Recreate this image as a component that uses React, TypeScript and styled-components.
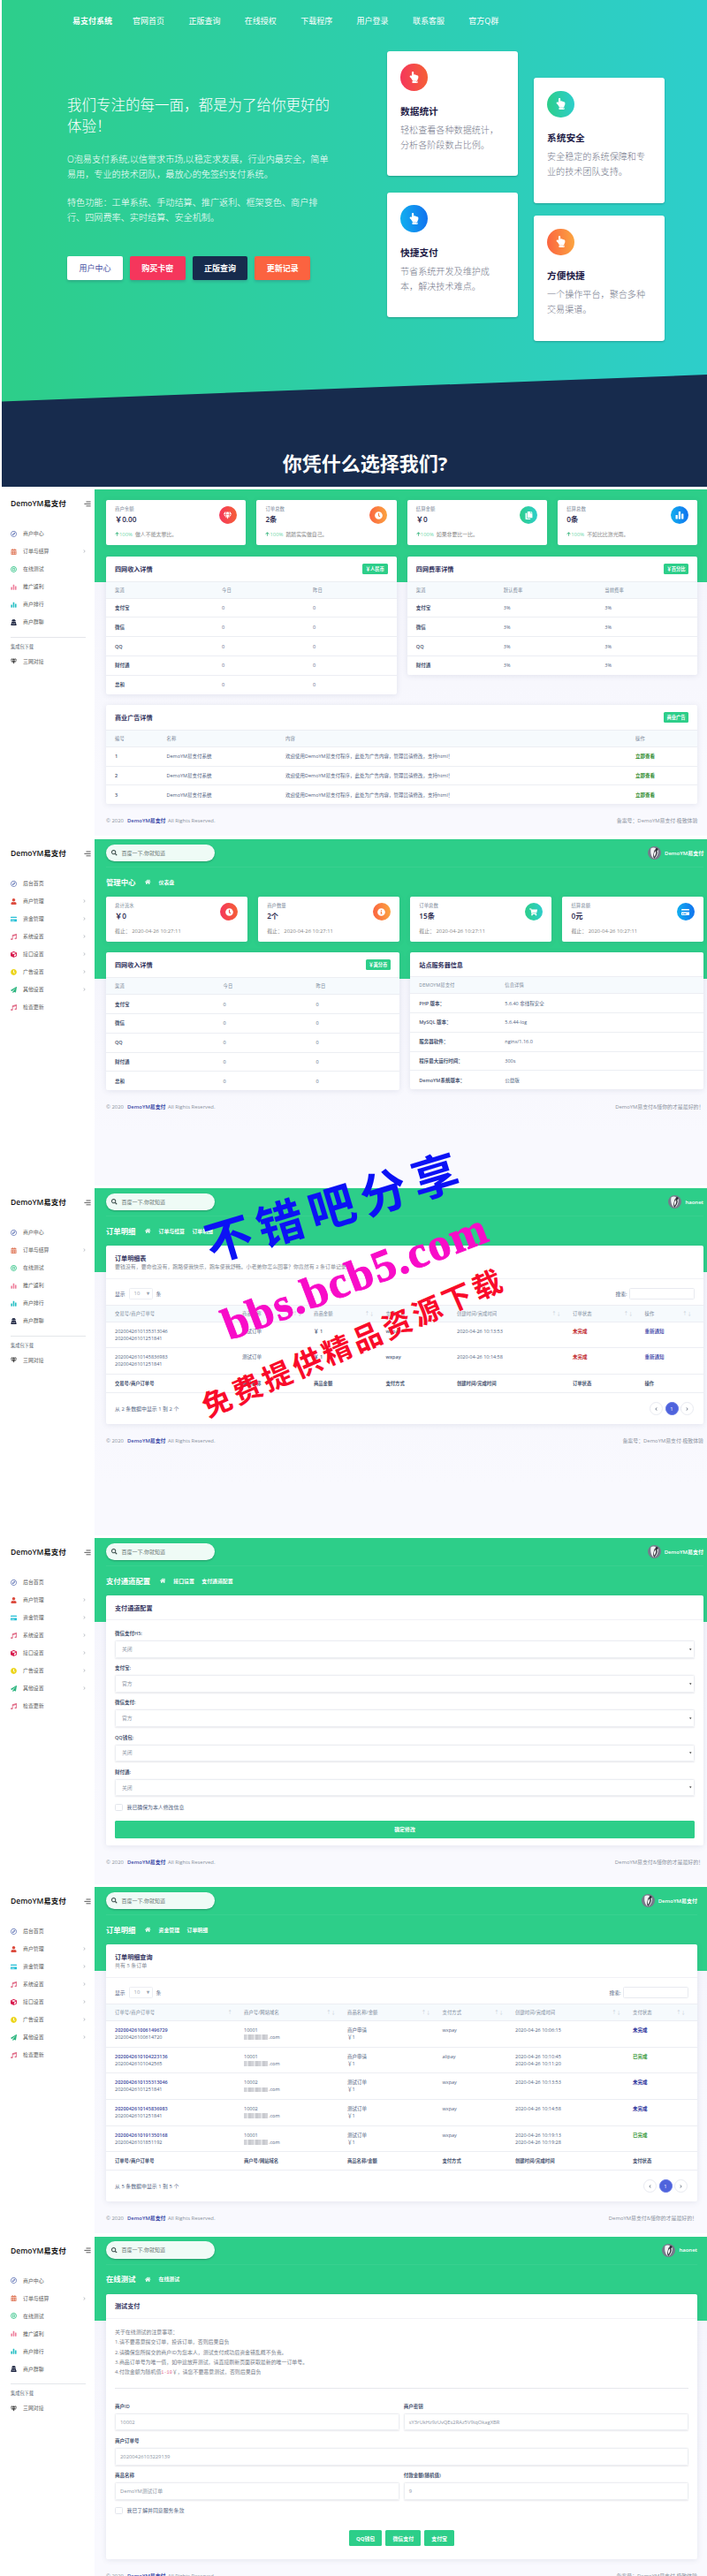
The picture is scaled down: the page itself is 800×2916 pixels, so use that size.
import React from "react";
import styled, { createGlobalStyle, css } from "styled-components";
import {
  FaHandPointUp, FaRegCompass, FaCalendarAlt, FaBullseye, FaUserSecret, FaGem, FaUser, FaCreditCard,
  FaMusic, FaCube, FaClock, FaPaperPlane, FaHome, FaSearch, FaArrowUp, FaCopy, FaShoppingCart,
  FaChevronRight, FaChevronLeft, FaInfoCircle,
} from "react-icons/fa";

const GREEN = "#2dce89";

const Global = createGlobalStyle`
  * { box-sizing: border-box; }
  body { margin: 0; background: #fff; }
  body, input, button { font-family: "Open Sans", "Noto Sans CJK SC", sans-serif; }
`;

const Page = styled.div`
  position: relative;
  width: 800px;
  height: 2916px;
  overflow: hidden;
  color: #525f7f;
  font-size: 5.5px;
  line-height: 8px;
  white-space: nowrap;
`;

/* ---------- landing ---------- */
const Hero = styled.section`
  margin-left: 2px;
  height: 551px;
  background: #172b4d;
`;
const HeroGreen = styled.div`
  height: 455px;
  background: linear-gradient(87deg, #2dce89, #2dcecc);
  clip-path: polygon(0 0, 100% 0, 100% 424px, 0 454.5px);
`;
const HeroNav = styled.nav`
  display: grid;
  grid-template-columns: 68px repeat(7, 63.4px);
  align-items: center;
  height: 48px;
  padding-left: 80px;
  color: #fff;
  font-size: 9px;
  strong { font-weight: 700; }
`;
const HeroBody = styled.div`
  display: flex;
  padding-left: 74px;
  color: #fff;
`;
const Intro = styled.div`
  width: 362px;
  padding-top: 59px;
`;
const Headline = styled.h1`
  margin: 0 0 16px;
  font-size: 16.5px;
  line-height: 24.3px;
  font-weight: 300;
`;
const Lead = styled.p`
  margin: 0 0 15.5px;
  font-size: 10.15px;
  line-height: 17px;
  font-weight: 300;
`;
const HeroButtons = styled.div`
  display: flex;
  gap: 8px;
  margin-top: 34.5px;
`;
const HeroButton = styled.button<{ $bg: string; $fg?: string }>`
  width: 62.8px;
  height: 27.5px;
  padding: 0;
  border: 0;
  border-radius: 2px;
  background: ${(p) => p.$bg};
  color: ${(p) => p.$fg || "#fff"};
  font-size: 9px;
  font-weight: ${(p) => (p.$fg ? 400 : 600)};
  box-shadow: 0 2px 3px rgba(50, 50, 93, 0.2);
`;
const FeatureColumn = styled.div<{ $top: number; $gap: number }>`
  display: flex;
  flex-direction: column;
  gap: ${(p) => p.$gap}px;
  margin-right: 18.5px;
  padding-top: ${(p) => p.$top}px;
`;
const FeatureCard = styled.article`
  width: 147.5px;
  height: 141.8px;
  padding: 14.5px 15px;
  border-radius: 3px;
  background: #fff;
  box-shadow: 0 1px 2px rgba(0, 60, 60, 0.3);
  h3 { margin: 16px 0 5px; color: #211a45; font-size: 10.7px; line-height: 15px; }
  p { margin: 0; color: #74788a; font-size: 10.1px; line-height: 17px; font-weight: 300; }
`;
const Disc = styled.span<{ $bg: string; $size: number }>`
  display: flex;
  flex: none;
  align-items: center;
  justify-content: center;
  width: ${(p) => p.$size}px;
  height: ${(p) => p.$size}px;
  border-radius: 50%;
  background: ${(p) => p.$bg};
  color: #fff;
  font-size: ${(p) => (p.$size > 25 ? 13 : 9)}px;
`;
const HeroTitle = styled.h2`
  margin: 53px 0 0;
  padding-left: 24px;
  color: #fff;
  text-align: center;
  font-size: 22px;
  line-height: 32px;
  font-weight: 700;
`;

/* ---------- dashboard shell ---------- */
const Shell = styled.section<{ $gap: number; $height: number }>`
  display: flex;
  height: ${(p) => p.$height}px;
  padding-top: ${(p) => p.$gap}px;
`;
const Side = styled.aside`
  width: 107px;
  flex: none;
  padding: 0 10px 0 12px;
`;
const Brand = styled.div`
  display: flex;
  align-items: center;
  justify-content: space-between;
  height: 32px;
  margin: 0 -6px 8px 0;
  color: #111;
  font-size: 8.5px;
  font-weight: 600;
`;
const NavItem = styled.div`
  display: flex;
  align-items: center;
  height: 20px;
  color: #5c5c5c;
  font-size: 5.9px;
  > svg { width: 7px; height: 7px; margin-right: 7px; }
  > svg:last-child:not(:first-child) { width: 3px; height: 4px; margin: 0 0 0 auto; color: #b8bcc2; }
`;
const SideLabel = styled.div`
  margin-top: 6.5px;
  padding-top: 6px;
  height: 18px;
  border-top: 1px solid #e4e6ea;
  font-size: 5.2px;
  color: #555f70;
`;
const Main = styled.main<{ $green: number; $right: number }>`
  flex: 1;
  min-width: 0;
  padding: 0 ${(p) => p.$right}px 0 13px;
  background: linear-gradient(${GREEN} ${(p) => p.$green}px, #f5f5fc ${(p) => p.$green}px, #f9f9fe 85%);
`;
const TopBar = styled.header`
  display: flex;
  align-items: center;
  justify-content: space-between;
  height: 32px;
  border-bottom: 1px solid rgba(255, 255, 255, 0.06);
`;
const Search = styled.div`
  display: flex;
  align-items: center;
  gap: 5px;
  width: 122.5px;
  height: 19.5px;
  padding-left: 6px;
  border-radius: 10px;
  background: #effbf6;
  color: #6b7775;
  font-size: 6px;
  box-shadow: 0 1px 2px rgba(20, 80, 60, 0.4);
  svg { width: 6.5px; height: 6.5px; color: #394b48; }
`;
const Account = styled.div`
  display: flex;
  align-items: center;
  gap: 4px;
  color: #fff;
  font-size: 6px;
  font-weight: 600;
`;
const TitleRow = styled.div`
  display: flex;
  align-items: center;
  height: 33px;
  color: #fff;
  font-size: 5.9px;
  font-weight: 600;
  h2 { margin: 0 10.5px 0 0; font-size: 8.4px; font-weight: 700; }
  svg { width: 6.5px; height: 6.5px; margin-right: 9px; }
  span { margin-right: 8.5px; }
`;
const StatRow = styled.div<{ $top?: number }>`
  display: grid;
  grid-template-columns: repeat(4, 1fr);
  gap: 12.3px;
  margin: ${(p) => p.$top || 0}px 0 12.5px;
`;
const cardBox = css`
  border-radius: 2px;
  background: #fff;
  box-shadow: 0 1px 6px rgba(70, 80, 120, 0.12);
`;
const StatCard = styled.div`
  ${cardBox}
  display: flex;
  justify-content: space-between;
  height: 50.7px;
  padding: 7px 10.5px 0 10px;
`;
const StatLabel = styled.div`
  font-size: 5.4px;
  line-height: 7px;
  color: #7a8798;
`;
const StatValue = styled.div`
  margin: 2.5px 0 10px;
  color: #28264b;
  font-size: 8.2px;
  line-height: 9px;
  font-weight: 600;
`;
const StatFoot = styled.div`
  color: #888;
  font-size: 5.9px;
  line-height: 7px;
  em { margin-right: 3px; color: #71d8ab; font-style: normal; }
  em svg { width: 5px; height: 5px; color: #3ab57e; vertical-align: -0.5px; }
`;
const TwoUp = styled.div`
  display: grid;
  grid-template-columns: 1fr 1fr;
  align-items: start;
  gap: 12.3px;
`;
const Card = styled.div<{ $top?: number; $height?: number }>`
  ${cardBox}
  margin-top: ${(p) => p.$top || 0}px;
  height: ${(p) => (p.$height ? p.$height + "px" : "auto")};
  overflow: hidden;
`;
const CardHead = styled.div<{ $height?: number; $line?: boolean }>`
  display: flex;
  align-items: center;
  justify-content: space-between;
  height: ${(p) => p.$height || 28}px;
  padding: 0 10px;
  border-bottom: ${(p) => (p.$line ? "1px solid #f1f2f6" : "0")};
  h3 { margin: 0; color: #32325d; font-size: 7.1px; line-height: 10px; font-weight: 700; }
  p { margin: 0; color: #838993; font-size: 5.95px; line-height: 10px; }
`;
const Chip = styled.span`
  width: 28.5px;
  height: 12px;
  border-radius: 1.5px;
  background: ${GREEN};
  color: #fff;
  font-size: 5.3px;
  line-height: 12px;
  font-weight: 700;
  text-align: center;
`;
const Row = styled.div<{ $cols: string; $kind?: "head" | "foot" | "body"; $height: number; $top?: boolean }>`
  display: grid;
  grid-template-columns: ${(p) => p.$cols};
  align-items: ${(p) => (p.$top ? "start" : "center")};
  height: ${(p) => p.$height}px;
  padding: ${(p) => (p.$top ? "6px" : "0")} 0 0 10px;
  border-top: 1px solid #eceef3;
  ${(p) => p.$kind === "head" && css`background: #f6fafd; color: #7d8b9c; font-size: 5.3px; letter-spacing: 0.1px;`}
  ${(p) => p.$kind === "foot" && css`border-bottom: 1px solid #eceef3; font-weight: 600; font-size: 5.3px; color: #47536f;`}
`;
const Cell = styled.div<{ $color?: string; $bold?: boolean; $sort?: boolean }>`
  color: ${(p) => p.$color || "inherit"};
  font-weight: ${(p) => (p.$bold ? 600 : 400)};
  ${(p) => p.$sort && css`display: flex; justify-content: space-between; padding-right: 13px;`}
  i { color: #c9d0d9; font-style: normal; }
`;
const Footer = styled.footer`
  display: flex;
  align-items: center;
  justify-content: space-between;
  height: 10px;
  margin-top: 14px;
  color: #8c93a0;
  font-size: 5.9px;
  b { margin: 0 1px; color: #3b4aa8; font-weight: 600; }
`;
const ListTools = styled.div`
  display: flex;
  align-items: center;
  height: 29px;
  padding: 4px 10px 0;
  gap: 5px;
  font-size: 5.8px;
  color: #525f7f;
  > span:nth-of-type(3) { margin-left: auto; margin-right: -2.5px; }
`;
const LengthSelect = styled.div`
  display: flex;
  justify-content: space-between;
  width: 27px;
  height: 13px;
  margin: 0 -1px;
  padding: 0 3px 0 5px;
  border: 1px solid #eceef3;
  border-radius: 1.5px;
  color: #9aa3b0;
  line-height: 11px;
  font-size: 5.9px;
`;
const FilterInput = styled.input`
  width: 74px;
  height: 13px;
  border: 1px solid #e8eaf0;
  border-radius: 1.5px;
  outline: 0;
`;
const SearchLabel = styled.label`
  margin: 0 -2.5px 0 auto;
`;
const ListBottom = styled.div`
  display: flex;
  align-items: center;
  justify-content: space-between;
  height: 35px;
  padding: 0 11px 0 10px;
  font-size: 5.9px;
`;
const Pager = styled.div`
  display: flex;
  gap: 2.5px;
`;
const PageDot = styled.span<{ $on?: boolean }>`
  display: flex;
  align-items: center;
  justify-content: center;
  width: 15px;
  height: 15px;
  border: 1px solid ${(p) => (p.$on ? "#5e72e4" : "#e8eaf1")};
  border-radius: 50%;
  background: ${(p) => (p.$on ? "#4f63dc" : "#fff")};
  color: ${(p) => (p.$on ? "#fff" : "#6a7486")};
  svg { width: 3px; height: 4px; }
`;
const Mosaic = styled.span`
  display: inline-block;
  width: 27px;
  height: 5.5px;
  margin-right: 1px;
  vertical-align: -1px;
  background: repeating-linear-gradient(90deg, #d2d3d8 0 3px, #e4e5e8 3px 5px, #c9cacf 5px 8px);
`;
const Form = styled.div<{ $top: number }>`
  padding: ${(p) => p.$top}px 10px 0;
`;
const FieldGrid = styled.div<{ $two?: boolean }>`
  display: grid;
  grid-template-columns: ${(p) => (p.$two ? "1fr 1fr" : "1fr")};
  gap: 4.5px;
  height: 39.1px;
`;
const FieldLabel = styled.div`
  height: 12px;
  font-weight: 600;
  color: #47536f;
`;
const FieldBox = styled.div<{ $pad?: number }>`
  display: flex;
  align-items: center;
  justify-content: space-between;
  height: 19.8px;
  padding: 0 2.5px 0 ${(p) => p.$pad || 5}px;
  border: 1px solid #eceef2;
  border-radius: 1.5px;
  box-shadow: 0 0.5px 1.5px rgba(50, 50, 93, 0.1);
  color: #8d96a5;
  font-size: 5.8px;
  svg { width: 2.5px; height: 2.5px; color: #444; }
`;
const CheckLine = styled.div`
  display: flex;
  align-items: center;
  gap: 5px;
  height: 10px;
  font-size: 5.9px;
  &::before { content: ""; width: 6.5px; height: 6.5px; border: 1px solid #e3e6ec; border-radius: 1.5px; }
`;
const Submit = styled.button`
  display: block;
  width: 100%;
  height: 20px;
  margin-top: 10px;
  padding: 0;
  border: 0;
  border-radius: 1.5px;
  background: ${GREEN};
  color: #fff;
  font-size: 5.9px;
  font-weight: 700;
`;
const Notes = styled.div`
  height: 69.5px;
  border-bottom: 1px solid #e6e8ed;
  font-size: 5.93px;
  line-height: 11.4px;
  color: #777d89;
  code { color: #e56a91; font: 5.2px "Liberation Mono", monospace; }
`;
const PayButtons = styled.div`
  display: flex;
  justify-content: center;
  gap: 3.7px;
  margin: 17px 0 0;
  button {
    height: 18.3px; padding: 0 8.3px; border: 0; border-radius: 1.5px;
    background: ${GREEN}; color: #fff; font-size: 5.9px; font-weight: 700;
  }
`;
const Stamp = styled.div<{ $x: number; $y: number; $turn: number; $size: number; $gap: number; $color: string; $stroke?: number }>`
  position: absolute;
  left: ${(p) => p.$x}px;
  top: ${(p) => p.$y}px;
  transform: translate(-50%, -50%) rotate(${(p) => p.$turn}deg);
  color: ${(p) => p.$color};
  font-family: "Liberation Serif", "Noto Sans CJK SC", serif;
  font-size: ${(p) => p.$size}px;
  letter-spacing: ${(p) => p.$gap}px;
  line-height: 1.15;
  font-weight: 700;
  -webkit-text-stroke: ${(p) => p.$stroke || 0}px ${(p) => p.$color};
`;

/* ---------- drawings ---------- */
const BarsIcon = ({ color = "currentColor", size = 10 }: { color?: string; size?: number }) => (
  <svg width={size} height={size} viewBox="0 0 10 10" fill={color}>
    <rect x="0.5" y="5" width="2.3" height="4.5" rx="0.5" /><rect x="3.8" y="1" width="2.3" height="8.5" rx="0.5" /><rect x="7.1" y="3.5" width="2.3" height="6" rx="0.5" />
  </svg>
);
const MenuIcon = () => (
  <svg width="8" height="7" viewBox="0 0 8 7" stroke="#4b4b4b" strokeWidth="0.9">
    <path d="M2.5 1H7.6M0.4 3.4H7.6M2.5 5.8H7.6" />
  </svg>
);
const CaretIcon = () => <svg viewBox="0 0 6 5"><path d="M0 0H6L3 5Z" fill="currentColor" /></svg>;
const Avatar = () => (
  <svg width="15" height="15" viewBox="0 0 30 30">
    <circle cx="15" cy="15" r="15" fill="#777a8b" />
    <path d="M7 5C11 1 20 3 23 8C25 15 21 25 15 28C9 26 5 17 7 5Z" fill="#f3f3f5" />
    <path d="M15 9C21 7 23 12 20 20L15 28C11 25 12 19 15 9Z" fill="#30313a" />
    <path d="M17 11C20 12 18 19 15 24C13 20 14 14 17 11Z" fill="#fff" />
    <circle cx="20" cy="7" r="3" fill="#292a33" />
  </svg>
);

const RED = "linear-gradient(87deg,#f5365c,#f56036)";
const ORANGE = "linear-gradient(87deg,#fb6340,#fba540)";
const TEAL = "linear-gradient(87deg,#2dce89,#2dcecc)";
const BLUE = "linear-gradient(87deg,#11b0ef,#1171ef)";

type Item = [React.ReactNode, string, boolean?];
const userItems: Item[] = [
  [<FaRegCompass color="#5e72b4" />, "商户中心"],
  [<FaCalendarAlt color="#e07a5c" />, "订单与结算", true],
  [<FaBullseye color="#4fcb97" />, "在线测试"],
  [<BarsIcon color="#ee7f9c" />, "推广返利"],
  [<BarsIcon color="#27bfc4" />, "商户排行"],
  [<FaUserSecret color="#1c2440" />, "商户群聊"],
];
const adminItems: Item[] = [
  [<FaRegCompass color="#5e72b4" />, "后台首页"],
  [<FaUser color="#dc4b3e" />, "商户管理", true],
  [<FaCreditCard color="#25bfd6" />, "资金管理", true],
  [<FaMusic color="#e2718c" />, "系统设置", true],
  [<FaCube color="#d8194c" />, "接口设置", true],
  [<FaClock color="#ecd51c" />, "广告设置", true],
  [<FaPaperPlane color="#2bb57e" />, "其他设置", true],
  [<FaMusic color="#e2718c" />, "检查更新"],
];
const NavEntry = ({ item }: { item: Item }) => (
  <NavItem>{item[0]}<span>{item[1]}</span>{item[2] && <FaChevronRight />}</NavItem>
);
const Sidebar = ({ admin }: { admin?: boolean }) => (
  <Side>
    <Brand>DemoYM易支付<MenuIcon /></Brand>
    {(admin ? adminItems : userItems).map((it) => <NavEntry key={it[1]} item={it} />)}
    {!admin && (<><SideLabel>集成包下载</SideLabel><NavEntry item={[<FaGem color="#404040" />, "三网对接"]} /></>)}
  </Side>
);
const Header = ({ name, title, crumbs }: { name: string; title: string; crumbs: string[] }) => (
  <>
    <TopBar>
      <Search><FaSearch />百度一下,你就知道</Search>
      <Account><Avatar />{name}</Account>
    </TopBar>
    <TitleRow><h2>{title}</h2><FaHome />{crumbs.map((c) => <span key={c}>{c}</span>)}</TitleRow>
  </>
);
const Foot = ({ admin }: { admin?: boolean }) => (
  <Footer>
    <div>© 2020 &nbsp;<b>DemoYM易支付</b> All Rights Reserved.</div>
    <div>{admin ? "DemoYM易支付&懂你的才是最好的！" : "备案号：DemoYM易支付·极致体验"}</div>
  </Footer>
);
const Stat = ({ label, value, foot, bg, icon }: { label: string; value: string; foot: React.ReactNode; bg: string; icon: React.ReactNode }) => (
  <StatCard>
    <div><StatLabel>{label}</StatLabel><StatValue>{value}</StatValue><StatFoot>{foot}</StatFoot></div>
    <Disc $bg={bg} $size={20}>{icon}</Disc>
  </StatCard>
);
const Up = ({ children }: { children: React.ReactNode }) => <><em><FaArrowUp />100%</em>{children}</>;

const SimpleTable = ({ cols, head, rows, height = 21.8 }: { cols: string; head: string[]; rows: string[][]; height?: number }) => (
  <>
    <Row $cols={cols} $kind="head" $height={19}>{head.map((h) => <Cell key={h}>{h}</Cell>)}</Row>
    {rows.map((r) => (
      <Row key={r[0]} $cols={cols} $height={height}>
        {r.map((c, i) => <Cell key={i} $bold={i === 0 || c === "立即查看"} $color={i === 0 ? "#47536f" : c === "立即查看" ? "#2e8b2e" : undefined}>{c}</Cell>)}
      </Row>
    ))}
  </>
);
const incomeRows = ["支付宝", "微信", "QQ", "财付通", "总和"].map((n) => [n, "0", "0"]);

const SortHead = ({ cols, head }: { cols: string; head: string[] }) => (
  <Row $cols={cols} $kind="head" $height={18.7}>
    {head.map((h, i) => <Cell key={h} $sort>{h}<i>{i ? "↑↓" : "↑"}</i></Cell>)}
  </Row>
);
const Tools = () => (
  <ListTools>
    <span>显示</span><LengthSelect>10<b>▾</b></LengthSelect><span>条</span>
    <SearchLabel>搜索:</SearchLabel><FilterInput aria-label="搜索" />
  </ListTools>
);
const Bottom = ({ n }: { n: number }) => (
  <ListBottom>
    从 {n} 条数据中显示 1 到 {n} 个
    <Pager><PageDot><FaChevronLeft /></PageDot><PageDot $on>1</PageDot><PageDot><FaChevronRight /></PageDot></Pager>
  </ListBottom>
);

const orderCols = "144px 81px 81.5px 80.5px 131px 81.5px 1fr";
const orderHead = ["交易号/商户订单号", "商品名称", "商品金额", "支付方式", "创建时间/完成时间", "订单状态", "操作"];
const adminCols = "146px 117px 107.5px 82.5px 133px 1fr";
const adminHead = ["订单号/商户订单号", "商户号/网站域名", "商品名称/金额", "支付方式", "创建时间/完成时间", "支付状态"];
const adminOrders = [
  ["2020042610061496729", "20200426100614720", "10001", "商户申请", "wxpay", "2020-04-26 10:06:15", ""],
  ["2020042610104223136", "20200426101042565", "10001", "商户申请", "alipay", "2020-04-26 10:10:45", "2020-04-26 10:11:20"],
  ["2020042610135313046", "20200426101251841", "10002", "测试订单", "wxpay", "2020-04-26 10:13:53", ""],
  ["2020042610145836983", "20200426101251841", "10002", "测试订单", "wxpay", "2020-04-26 10:14:58", ""],
  ["2020042610191350168", "20200426101851192", "10001", "测试订单", "wxpay", "2020-04-26 10:19:13", "2020-04-26 10:19:28"],
];

const Feature = ({ bg, title, a, b }: { bg: string; title: string; a: string; b: string }) => (
  <FeatureCard>
    <Disc $bg={bg} $size={30.5}><FaHandPointUp /></Disc>
    <h3>{title}</h3>
    <p>{a}<br />{b}</p>
  </FeatureCard>
);
const Field = ({ label, value, select }: { label: string; value: string; select?: boolean }) => (
  <div><FieldLabel>{label}</FieldLabel><FieldBox $pad={select ? 7 : 5}>{value}{select && <CaretIcon />}</FieldBox></div>
);

const stamp = "截止： 2020-04-26 10:27:11";

export default function App() {
  return (
    <Page>
      <Global />
      <Hero>
        <HeroGreen>
          <HeroNav>
            <strong>易支付系统</strong>
            {["官网首页", "正版查询", "在线授权", "下载程序", "用户登录", "联系客服", "官方Q群"].map((t) => <span key={t}>{t}</span>)}
          </HeroNav>
          <HeroBody>
            <Intro>
              <Headline>我们专注的每一面，都是为了给你更好的<br />体验！</Headline>
              <Lead>O泡易支付系统,以信誉求市场,以稳定求发展，行业内最安全，简单<br />易用，专业的技术团队，最放心的免签约支付系统。</Lead>
              <Lead>特色功能：工单系统、手动结算、推广返利、框架变色、商户排<br />行、四网费率、实时结算、安全机制。</Lead>
              <HeroButtons>
                <HeroButton $bg="#fff" $fg="#4a4fa3">用户中心</HeroButton>
                <HeroButton $bg="#f5365c">购买卡密</HeroButton>
                <HeroButton $bg="#172b4d">正版查询</HeroButton>
                <HeroButton $bg="#fb6340">更新记录</HeroButton>
              </HeroButtons>
            </Intro>
            <FeatureColumn $top={9.5} $gap={18.4}>
              <Feature bg={RED} title="数据统计" a="轻松查看各种数据统计，" b="分析各阶段数占比例。" />
              <Feature bg={BLUE} title="快捷支付" a="节省系统开发及维护成" b="本，解决技术难点。" />
            </FeatureColumn>
            <FeatureColumn $top={40} $gap={14.4}>
              <Feature bg={TEAL} title="系统安全" a="安全稳定的系统保障和专" b="业的技术团队支持。" />
              <Feature bg={ORANGE} title="方便快捷" a="一个操作平台，聚合多种" b="交易渠道。" />
            </FeatureColumn>
          </HeroBody>
        </HeroGreen>
        <HeroTitle>你凭什么选择我们?</HeroTitle>
      </Hero>

      <Shell $gap={3.4} $height={395}>
        <Sidebar />
        <Main $green={105} $right={10.7}>
          <StatRow $top={12}>
            <Stat label="商户余额" value="￥0.00" foot={<Up>做人不能太攀比。</Up>} bg={RED} icon={<FaGem />} />
            <Stat label="订单总数" value="2条" foot={<Up>踏踏实实做自己。</Up>} bg={ORANGE} icon={<FaClock />} />
            <Stat label="结算金额" value="￥0" foot={<Up>如果非要比一比。</Up>} bg={TEAL} icon={<FaCopy />} />
            <Stat label="结算总数" value="0条" foot={<Up>不如比比激光雨。</Up>} bg={BLUE} icon={<BarsIcon />} />
          </StatRow>
          <TwoUp>
            <Card>
              <CardHead><h3>四网收入详情</h3><Chip>￥人民币</Chip></CardHead>
              <SimpleTable cols="121px 103px 1fr" head={["渠道", "今日", "昨日"]} rows={incomeRows} />
            </Card>
            <Card>
              <CardHead><h3>四网费率详情</h3><Chip>￥百分比</Chip></CardHead>
              <SimpleTable cols="99px 114.5px 1fr" head={["渠道", "默认费率", "当前费率"]} rows={["支付宝", "微信", "QQ", "财付通"].map((n) => [n, "3%", "3%"])} />
            </Card>
          </TwoUp>
          <Card $top={12.3}>
            <CardHead><h3>商业广告详情</h3><Chip>商业广告</Chip></CardHead>
            <SimpleTable cols="58.5px 134.5px 396px 1fr" head={["编号", "名称", "内容", "操作"]}
              rows={["1", "2", "3"].map((n) => [n, "DemoYM易支付系统", "欢迎使用DemoYM易支付程序，此处为广告内容，管理员请修改，支持html！", "立即查看"])} />
          </Card>
          <Foot />
        </Main>
      </Shell>

      <Shell $gap={4} $height={396}>
        <Sidebar admin />
        <Main $green={158} $right={3.7}>
          <Header name="DemoYM易支付" title="管理中心" crumbs={["仪表盘"]} />
          <StatRow>
            <Stat label="总计流水" value="￥0" foot={stamp} bg={RED} icon={<FaClock />} />
            <Stat label="商户数量" value="2个" foot={stamp} bg={ORANGE} icon={<FaInfoCircle />} />
            <Stat label="订单总数" value="15条" foot={stamp} bg={TEAL} icon={<FaShoppingCart />} />
            <Stat label="结算总额" value="0元" foot={stamp} bg={BLUE} icon={<FaCreditCard />} />
          </StatRow>
          <TwoUp>
            <Card>
              <CardHead><h3>四网收入详情</h3><Chip>￥美分币</Chip></CardHead>
              <SimpleTable cols="122.5px 105px 1fr" head={["渠道", "今日", "昨日"]} rows={incomeRows} />
            </Card>
            <Card>
              <CardHead $height={27}><h3>站点服务器信息</h3></CardHead>
              <SimpleTable cols="97px 1fr" head={["DEMOYM易支付", "信息详情"]} rows={[
                ["PHP 版本：", "5.6.40 非线程安全"], ["MySQL 版本：", "5.6.44-log"], ["服务器软件：", "nginx/1.16.0"],
                ["程序最大运行时间：", "300s"], ["DemoYM系统版本：", "公益版"],
              ]} />
            </Card>
          </TwoUp>
          <Foot admin />
        </Main>
      </Shell>

      <Shell $gap={3} $height={395.5}>
        <Sidebar />
        <Main $green={95.5} $right={4}>
          <Header name="haonet" title="订单明细" crumbs={["订单与结算", "订单明细"]} />
          <Card>
            <CardHead $height={38} $line><div><h3>订单明细表</h3><p>要钱没有，要命也没有，跑路使我快乐，跑车使我舒畅。小老弟你怎么回事？你竟然有 2 条订单记录</p></div></CardHead>
            <Tools />
            <SortHead cols={orderCols} head={orderHead} />
            {[["2020042610135313046", "10:13:53"], ["2020042610145836983", "10:14:58"]].map((o) => (
              <Row key={o[0]} $cols={orderCols} $height={29.7} $top>
                <Cell>{o[0]}<br />20200426101251841</Cell>
                <Cell>测试订单</Cell>
                <Cell $bold>￥ 1</Cell>
                <Cell $bold>wxpay</Cell>
                <Cell>2020-04-26 {o[1]}</Cell>
                <Cell $bold $color="#c1272d">未完成</Cell>
                <Cell $bold $color="#5257b0">重新通知</Cell>
              </Row>
            ))}
            <Row $cols={orderCols} $kind="foot" $height={22}>{orderHead.map((h) => <Cell key={h} $bold>{h}</Cell>)}</Row>
            <Bottom n={2} />
          </Card>
          <Foot />
        </Main>
      </Shell>

      <Shell $gap={3.5} $height={395}>
        <Sidebar admin />
        <Main $green={94.7} $right={4}>
          <Header name="DemoYM易支付" title="支付通道配置" crumbs={["接口设置", "支付通道配置"]} />
          <Card $height={283}>
            <CardHead $line><h3>支付通道配置</h3></CardHead>
            <Form $top={11.3}>
              {[["微信支付H5:", "关闭"], ["支付宝:", "官方"], ["微信支付:", "官方"], ["QQ钱包:", "关闭"], ["财付通:", "关闭"]].map((f) => (
                <FieldGrid key={f[0]}><Field label={f[0]} value={f[1]} select /></FieldGrid>
              ))}
              <CheckLine>我已确保为本人修改信息</CheckLine>
              <Submit>确定修改</Submit>
            </Form>
          </Card>
          <Foot admin />
        </Main>
      </Shell>

      <Shell $gap={3.7} $height={395.5}>
        <Sidebar admin />
        <Main $green={95.5} $right={11}>
          <Header name="DemoYM易支付" title="订单明细" crumbs={["资金管理", "订单明细"]} />
          <Card>
            <CardHead $height={38} $line><div><h3>订单明细查询</h3><p>共有 5 条订单</p></div></CardHead>
            <Tools />
            <SortHead cols={adminCols} head={adminHead} />
            {adminOrders.map((o) => (
              <Row key={o[0]} $cols={adminCols} $height={29.7} $top>
                <Cell><Cell as="span" $bold $color="#4048a0">{o[0]}</Cell><br />{o[1]}</Cell>
                <Cell>{o[2]}<br /><Mosaic />.com</Cell>
                <Cell>{o[3]}<br />￥1</Cell>
                <Cell>{o[4]}</Cell>
                <Cell>{o[5]}<br />{o[6]}</Cell>
                <Cell $bold $color={o[6] ? "#3c9a3c" : "#2a2f9a"}>{o[6] ? "已完成" : "未完成"}</Cell>
              </Row>
            ))}
            <Row $cols={adminCols} $kind="foot" $height={22}>{adminHead.map((h) => <Cell key={h} $bold>{h}</Cell>)}</Row>
            <Bottom n={5} />
          </Card>
          <Foot admin />
        </Main>
      </Shell>

      <Shell $gap={3.7} $height={400}>
        <Sidebar />
        <Main $green={95} $right={11}>
          <Header name="haonet" title="在线测试" crumbs={["在线测试"]} />
          <Card $height={300.5}>
            <CardHead $line><h3>测试支付</h3></CardHead>
            <Form $top={10}>
              <Notes>
                关于在线测试的注意事项：<br />
                1.请不要恶意提交订单，投诉订单，否则后果自负<br />
                2.请确保您所提交的商户ID为您本人，测试支付成功后资金错乱概不负责。<br />
                3.商品订单号为唯一值，如中途放弃测试，请直接刷新页面获取最新的唯一订单号。<br />
                4.付款金额为随机值<code>1-10</code>￥，请您不要恶意测试，否则后果自负
              </Notes>
            </Form>
            <Form $top={15.5}>
              <FieldGrid $two><Field label="商户ID" value="10002" /><Field label="商户密钥" value="sY3rUkHz9zUvQEs2RAz5V9iqOkagXBR" /></FieldGrid>
              <FieldGrid><Field label="商户订单号" value="20200426103229139" /></FieldGrid>
              <FieldGrid $two><Field label="商品名称" value="DemoYM测试订单" /><Field label="付款金额(随机值)" value="9" /></FieldGrid>
              <CheckLine>我已了解并同意服务条款</CheckLine>
              <PayButtons><button>QQ钱包</button><button>微信支付</button><button>支付宝</button></PayButtons>
            </Form>
          </Card>
          <Foot />
        </Main>
      </Shell>

      <Stamp $x={380} $y={1368} $turn={-16.8} $size={53} $gap={8} $color="#0c12f5">不错吧分享</Stamp>
      <Stamp $x={402} $y={1445} $turn={-21} $size={51} $gap={1.7} $stroke={1} $color="#f80cc8">bbs.bcb5.com</Stamp>
      <Stamp $x={401} $y={1522} $turn={-23.5} $size={33} $gap={4} $color="#f90b2a">免费提供精品资源下载</Stamp>
    </Page>
  );
}
